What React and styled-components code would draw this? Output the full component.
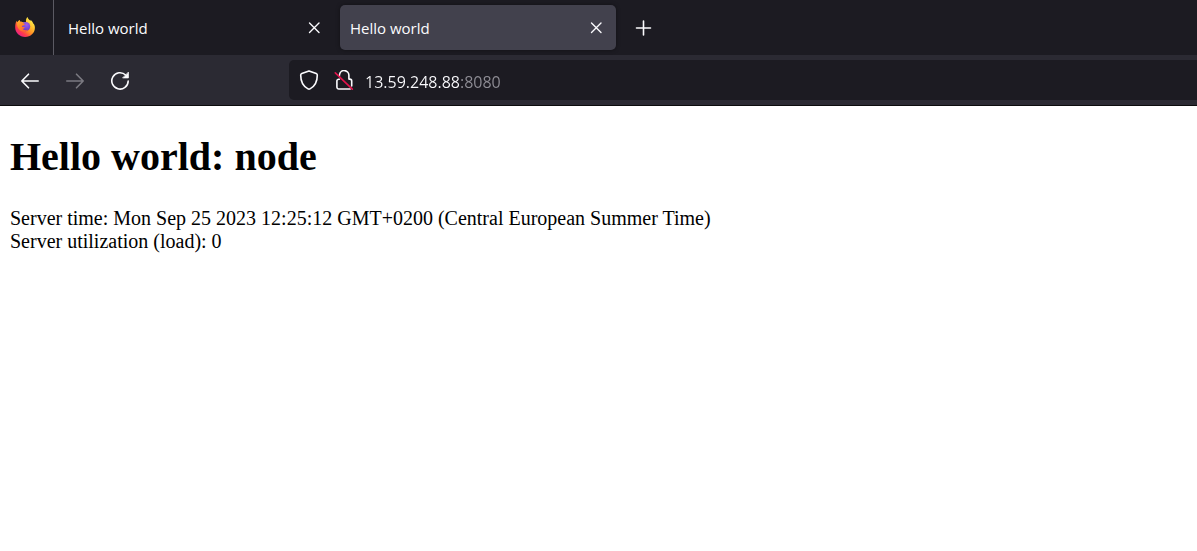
import React from "react";
import styled, { createGlobalStyle } from "styled-components";

const GlobalStyle = createGlobalStyle`
  * { box-sizing: border-box; }
  body { margin: 0; background: #fff; }
`;

const Chrome = styled.header`
  font-family: "Open Sans", "Noto Sans", sans-serif;
  color: #fbfbfe;
  background: #2b2a33;
  border-bottom: 1px solid #0c0c0d;
`;

const TabStrip = styled.div`
  display: flex;
  align-items: center;
  height: 55px;
  background: #1c1b22;
`;

const LogoButton = styled.button`
  display: flex;
  align-items: center;
  justify-content: center;
  width: 54px;
  height: 55px;
  padding: 0 4px 2px 0;
  border: 0;
  border-right: 1px solid #5b5a63;
  background: none;
`;

const Tabs = styled.div`
  display: flex;
  gap: 6px;
  padding-left: 4px;
`;

const Tab = styled.div`
  display: flex;
  align-items: center;
  justify-content: space-between;
  width: 276px;
  height: 45px;
  padding: 0 5px 0 10px;
  border-radius: 5px;
  background: ${(p) => (p.$active ? "#42414d" : "transparent")};
  box-shadow: ${(p) => (p.$active ? "0 0 4px rgba(0, 0, 0, 0.4)" : "none")};
`;

const TabLabel = styled.button`
  padding: 0;
  border: 0;
  background: none;
  color: inherit;
  font-family: inherit;
  font-size: 15px;
  line-height: 20px;
`;

const IconButton = styled.button`
  display: flex;
  align-items: center;
  justify-content: center;
  width: ${(p) => p.$size}px;
  height: ${(p) => p.$size}px;
  padding: 0;
  border: 0;
  border-radius: 5px;
  background: none;
  color: inherit;

  &:disabled { color: #7b7a82; }
`;

const NewTab = styled(IconButton)`
  margin-left: 7px;
`;

const NavBar = styled.div`
  display: flex;
  align-items: center;
  height: 50px;
  padding-left: 10px;
`;

const NavButtons = styled.div`
  display: flex;
  flex: none;
  gap: 5px;
  margin-right: 149px;
  padding-top: 2px;
`;

const AddressBar = styled.form`
  display: flex;
  flex: 1;
  align-items: center;
  height: 40px;
  padding-left: 2px;
  border-radius: 5px 0 0 5px;
  background: #1c1b22;
`;

const AddressInput = styled.input`
  flex: 1;
  min-width: 0;
  height: 24px;
  margin: 4px 0 0 4px;
  padding: 0;
  border: 0;
  outline: 0;
  font-family: inherit;
  font-size: 16px;
  line-height: 24px;
  color: transparent;
  caret-color: #fbfbfe;
  background: linear-gradient(to right, #fbfbfe 95px, #8f8e96 95px);
  background-clip: text;
`;

const Page = styled.main`
  padding: 28px 10px;
  font-family: "Liberation Serif", serif;
  color: #000;
`;

const Title = styled.h1`
  margin: 0 0 27px;
  font-size: 40px;
  line-height: 46px;
`;

const Line = styled.div`
  font-size: 20px;
  line-height: 23px;
`;

const Icon = ({ size = 20, width = 1.6, children }) => (
  <svg
    width={size}
    height={size}
    viewBox={`0 0 ${size} ${size}`}
    fill="none"
    stroke="currentColor"
    strokeWidth={width}
    strokeLinecap="round"
    strokeLinejoin="round"
    aria-hidden="true"
  >
    {children}
  </svg>
);

const CloseIcon = () => (
  <Icon size={20} width={1.4}>
    <path d="M5.500 5l9.500 9.500M15 5l-9.500 9.500" />
  </Icon>
);

const FirefoxLogo = () => (
  <svg width="20" height="20" viewBox="0 0 20 20" aria-hidden="true">
    <defs>
      <linearGradient id="flame" x1="0.85" y1="0.1" x2="0.15" y2="0.9">
        <stop offset="0" stopColor="#fff44f" />
        <stop offset="0.3" stopColor="#ffc02e" />
        <stop offset="0.55" stopColor="#ff8a25" />
        <stop offset="0.78" stopColor="#ff3b4b" />
        <stop offset="1" stopColor="#e81f8a" />
      </linearGradient>
      <radialGradient id="globe" cx="0.6" cy="0.3" r="0.8">
        <stop offset="0" stopColor="#a05be8" />
        <stop offset="0.5" stopColor="#7a48d8" />
        <stop offset="1" stopColor="#5b35b5" />
      </radialGradient>
      <linearGradient id="fox" x1="0" y1="0" x2="0.8" y2="1">
        <stop offset="0" stopColor="#ffb82b" />
        <stop offset="0.5" stopColor="#ff8526" />
        <stop offset="1" stopColor="#ff5a38" />
      </linearGradient>
    </defs>
    <path
      fill="url(#flame)"
      d="M12.500 0c.5 1.800 1.700 2.800 3 4 .1-.4.1-.8 0-1.200 1.500 1.200 2.500 2.800 3 4.400 0-.2.1-.4.1-.6.8 1.200 1.300 2.800 1.300 4.200 0 5.200-4.400 9.200-9.800 9.200S.2 16 .2 10.600c0-2.200.2-4.900 1.500-6.900.1.700.3 1 .7 1.500C3 4.300 3.800 3.500 4.700 2.900c0 .7.2 1.400.6 1.900 1.200-.2 2.300 0 3.200.4.800-.3 1.600-.3 2.500-.2-.3-1.800.2-3.600 1.500-5z"
    />
    <circle cx="10.600" cy="9.600" r="4.600" fill="url(#globe)" />
    <path
      fill="url(#fox)"
      d="M2.400 5.200C3 4.300 3.800 3.500 4.700 2.900c0 .7.2 1.400.6 1.900 1.200-.1 2.300.4 2.900 1.200.5.500.8.700 1.700.9 0 .8-1.300 1.300-2.200 1.700-.6.400-.7 1-.7 1.600.9-.3 2-.2 2.900.3-.4 1-1.400 1.100-2.300 1.300.9 1.500 3.700 1.900 5.600.6-1.700 2.600-5.900 2.800-8.600.5C2.400 10.800 1.700 7.800 2.400 5.200z"
    />
  </svg>
);

const BackIcon = () => (
  <Icon>
    <path d="M18.200 10H1.800M8.500 3.200L1.800 10l6.700 6.800" />
  </Icon>
);

const ForwardIcon = () => (
  <Icon>
    <path d="M1.800 10h16.400M11.500 3.200l6.700 6.800-6.700 6.800" />
  </Icon>
);

const ReloadIcon = () => (
  <Icon>
    <path d="M15.700 4A8.200 8.200 0 1 0 18.200 10" />
    <path d="M18.400 1.500v5.400H13z" fill="currentColor" strokeWidth="0.800" />
  </Icon>
);

const ShieldIcon = () => (
  <Icon>
    <path d="M10 .9l7.200 2.700c.7.3 1.100.8 1.100 1.500 0 6.300-2.200 11.300-7.300 13.800-.6.300-1.400.3-2 0C3.900 16.400 1.700 11.400 1.700 5.100c0-.7.4-1.200 1.100-1.500z" />
  </Icon>
);

const InsecureLockIcon = () => (
  <Icon>
    <path d="M5.600 4.300a4.700 4.700 0 0 1 9.300 1.100v3.700h.9a1.900 1.900 0 0 1 1.900 1.900v5M5.400 9.200h-.6a1.900 1.900 0 0 0-1.900 1.900v6a1.900 1.900 0 0 0 1.900 1.900h11.400M5.400 5.200v1" />
    <path d="M1.300 2.800l17 16.400" stroke="#e2144c" />
  </Icon>
);

const tabs = [
  { id: 1, label: "Hello world", active: false },
  { id: 2, label: "Hello world", active: true },
];

export default function App() {
  return (
    <>
      <GlobalStyle />
      <Chrome>
        <TabStrip>
          <LogoButton aria-label="Firefox View">
            <FirefoxLogo />
          </LogoButton>
          <Tabs>
            {tabs.map((tab) => (
              <Tab key={tab.id} $active={tab.active}>
                <TabLabel aria-pressed={tab.active}>{tab.label}</TabLabel>
                <IconButton $size={30} aria-label="Close tab">
                  <CloseIcon />
                </IconButton>
              </Tab>
            ))}
          </Tabs>
          <NewTab $size={40} aria-label="New tab">
            <Icon>
              <path d="M10.500 3v14M3.500 10h14" />
            </Icon>
          </NewTab>
        </TabStrip>
        <NavBar>
          <NavButtons>
            <IconButton $size={40} aria-label="Back">
              <BackIcon />
            </IconButton>
            <IconButton $size={40} aria-label="Forward" disabled>
              <ForwardIcon />
            </IconButton>
            <IconButton $size={40} aria-label="Reload">
              <ReloadIcon />
            </IconButton>
          </NavButtons>
          <AddressBar>
            <IconButton type="button" $size={36} aria-label="Tracking protection">
              <ShieldIcon />
            </IconButton>
            <IconButton type="button" $size={34} aria-label="Connection is not secure">
              <InsecureLockIcon />
            </IconButton>
            <AddressInput type="text" aria-label="Address" defaultValue="13.59.248.88:8080" />
          </AddressBar>
        </NavBar>
      </Chrome>
      <Page>
        <Title>Hello world: node</Title>
        <Line>Server time: Mon Sep 25 2023 12:25:12 GMT+0200 (Central European Summer Time)</Line>
        <Line>Server utilization (load): 0</Line>
      </Page>
    </>
  );
}
